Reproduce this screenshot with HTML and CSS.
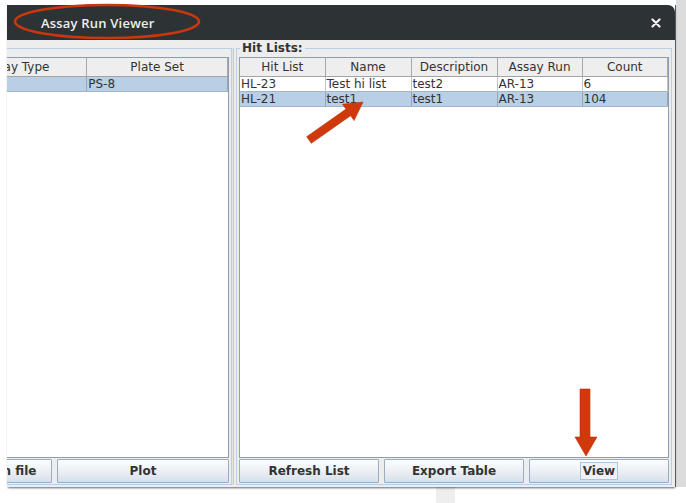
FILE: index.html
```html
<!DOCTYPE html>
<html>
<head>
<meta charset="utf-8">
<link rel="stylesheet" href="styles.css">
</head>
<body>
<div class="screen">
  <div class="window">
    <div class="titlebar">
      <span class="title">Assay Run Viewer</span>
      <svg class="close" width="10" height="10" viewBox="0 0 10 10"><path d="M1.5 1.5 L8.5 8.5 M8.5 1.5 L1.5 8.5" stroke="#f2f2f2" stroke-width="2.2" stroke-linecap="round"/></svg>
    </div>
    <div class="content">
      <section class="panel panel-left">
        <div class="tablebox tablebox-left">
          <table class="grid grid-left">
            <colgroup><col class="c-wide"><col class="c-plate"></colgroup>
            <thead><tr><th>Assay Type</th><th>Plate Set</th></tr></thead>
            <tbody><tr class="sel"><td></td><td>PS-8</td></tr></tbody>
          </table>
        </div>
        <div class="buttons buttons-left">
          <button class="btn btn-open">Open file</button>
          <button class="btn grow">Plot</button>
        </div>
      </section>
      <div class="divider"></div>
      <section class="panel panel-right">
        <span class="legend">Hit Lists:</span>
        <div class="tablebox">
          <table class="grid">
            <colgroup><col class="c85"><col class="c86"><col class="c86"><col class="c85"><col></colgroup>
            <thead><tr><th>Hit List</th><th>Name</th><th>Description</th><th>Assay Run</th><th>Count</th></tr></thead>
            <tbody>
              <tr><td>HL-23</td><td>Test hi list</td><td>test2</td><td>AR-13</td><td>6</td></tr>
              <tr class="sel"><td>HL-21</td><td>test1</td><td>test1</td><td>AR-13</td><td>104</td></tr>
            </tbody>
          </table>
        </div>
        <div class="buttons">
          <button class="btn grow">Refresh List</button>
          <button class="btn grow">Export Table</button>
          <button class="btn grow"><span class="focus">View</span></button>
        </div>
      </section>
    </div>
  </div>
  <div class="side-strip"></div>
</div>
<div class="below">
  <div class="patch"></div>
</div>
<svg class="annotations" width="686" height="503" viewBox="0 0 686 503">
  <ellipse cx="107" cy="21.5" rx="92" ry="16.5" fill="none" stroke="#c9370c" stroke-width="2.6"/>
  <polygon points="306.7,136.7 346,109.1 342.5,104.2 363,102 354.1,120.6 350.6,115.7 311.3,143.3" fill="#d0390b" stroke="#b8300a" stroke-width="0.6"/>
  <polygon points="580,389 590,389 590,437 597,437 586,456 575,437 580,437" fill="#d0390b" stroke="#b8300a" stroke-width="0.6"/>
</svg>
</body>
</html>
```
FILE: styles.css
```css
* { box-sizing: border-box; margin: 0; padding: 0; }

body {
  margin: 0;
  width: 686px;
  height: 503px;
  overflow: hidden;
  background: #ffffff;
  font-family: "DejaVu Sans", "Liberation Sans", sans-serif;
  font-size: 12px;
  color: #333333;
  position: relative;
}

.screen {
  display: flex;
  height: 487px;
}

.window {
  margin-top: 5px;
  margin-left: 7px;
  width: 669px;
  height: 482px;
  display: flex;
  flex-direction: column;
  border-right: 1px solid #55595c;
  box-shadow: 0 2px 2px -1px rgba(0, 0, 0, 0.6);
  position: relative;
  z-index: 1;
}

.titlebar {
  height: 35px;
  flex: none;
  background: #2d3335;
  border-top-right-radius: 7px;
  display: flex;
  align-items: center;
  justify-content: space-between;
  padding: 0 14px 0 34px;
}

.title {
  font-family: "Open Sans", "DejaVu Sans", sans-serif;
  font-weight: 600;
  font-size: 13px;
  color: #eeeeec;
  letter-spacing: 0.2px;
}

.close { display: block; margin-top: 1px; }

.content {
  flex: 1;
  background: #ededed;
  display: flex;
  padding: 8px 3px 2px 0;
}

.panel {
  border: 1px solid #b8cfe5;
  display: flex;
  flex-direction: column;
  gap: 1px;
  padding: 8px 2px 1px 2px;
  position: relative;
}

.panel-left {
  width: 225px;
  border-left: none;
  padding-left: 0;
  overflow: hidden;
}

.panel-right {
  width: 436px;
}

.divider {
  width: 4px;
  background: linear-gradient(to right, #e4e4e4 0, #e4e4e4 1px, #c8c8c8 1px, #c8c8c8 2px, #ededed 2px);
}

.legend {
  position: absolute;
  left: 3px;
  top: -8px;
  padding: 0 2px;
  background: #ededed;
  font-weight: bold;
  font-size: 12px;
  line-height: 14px;
  color: #333333;
}

.tablebox {
  flex: 1;
  background: #ffffff;
  border: 1px solid #8e9cab;
  overflow: hidden;
}

.tablebox-left {
  margin-left: -62px;
}

.grid {
  border-collapse: collapse;
  table-layout: fixed;
  width: 100%;
}

.grid-left { width: auto; }

.c-wide { width: 141px; }
.c-plate { width: 141px; }
.c85 { width: 85px; }
.c86 { width: 86px; }

.grid th {
  height: 18px;
  padding: 0;
  font-weight: normal;
  text-align: center;
  background: #eeeeee;
  border-right: 1px solid #a9a9a9;
  border-bottom: 1px solid #a4a4a4;
  color: #333333;
  white-space: nowrap;
  overflow: hidden;
  line-height: 16px;
}

.grid td {
  height: 15px;
  padding: 0 0 0 1px;
  line-height: 14px;
  border-right: 1px solid #c4c4c4;
  white-space: nowrap;
  overflow: hidden;
  color: #333333;
}

.grid tr.sel td {
  background: #b8cfe5;
  border-top: 1px solid #a2b5ca;
  border-bottom: 1px solid #a2b5ca;
  border-right-color: #97a6b6;
}

.buttons {
  display: flex;
  gap: 5px;
  height: 24px;
  flex: none;
}

.buttons-left {
  margin-left: -47px;
}

.btn {
  height: 24px;
  border: 1px solid #9cadc0;
  border-radius: 1px;
  background: linear-gradient(to bottom, #fbfcfd 0%, #eef2f6 45%, #d6dfe9 100%);
  font-family: "DejaVu Sans", sans-serif;
  font-weight: bold;
  font-size: 12px;
  color: #333333;
  display: flex;
  align-items: center;
  justify-content: center;
}

.btn-open { width: 92px; flex: none; }
.grow { flex: 1; }

.focus {
  display: inline-block;
  border: 1px solid #b3c3d4;
  background: #eef2f7;
  padding: 1px 2px;
  line-height: 14px;
}

.side-strip {
  flex: 1;
  background: #dcdcdc;
}

.below {
  height: 16px;
  display: flex;
  padding-left: 436px;
}

.patch {
  width: 19px;
  background: #eeeeee;
}

.annotations {
  position: absolute;
  left: 0;
  top: 0;
  z-index: 5;
  pointer-events: none;
}
```
